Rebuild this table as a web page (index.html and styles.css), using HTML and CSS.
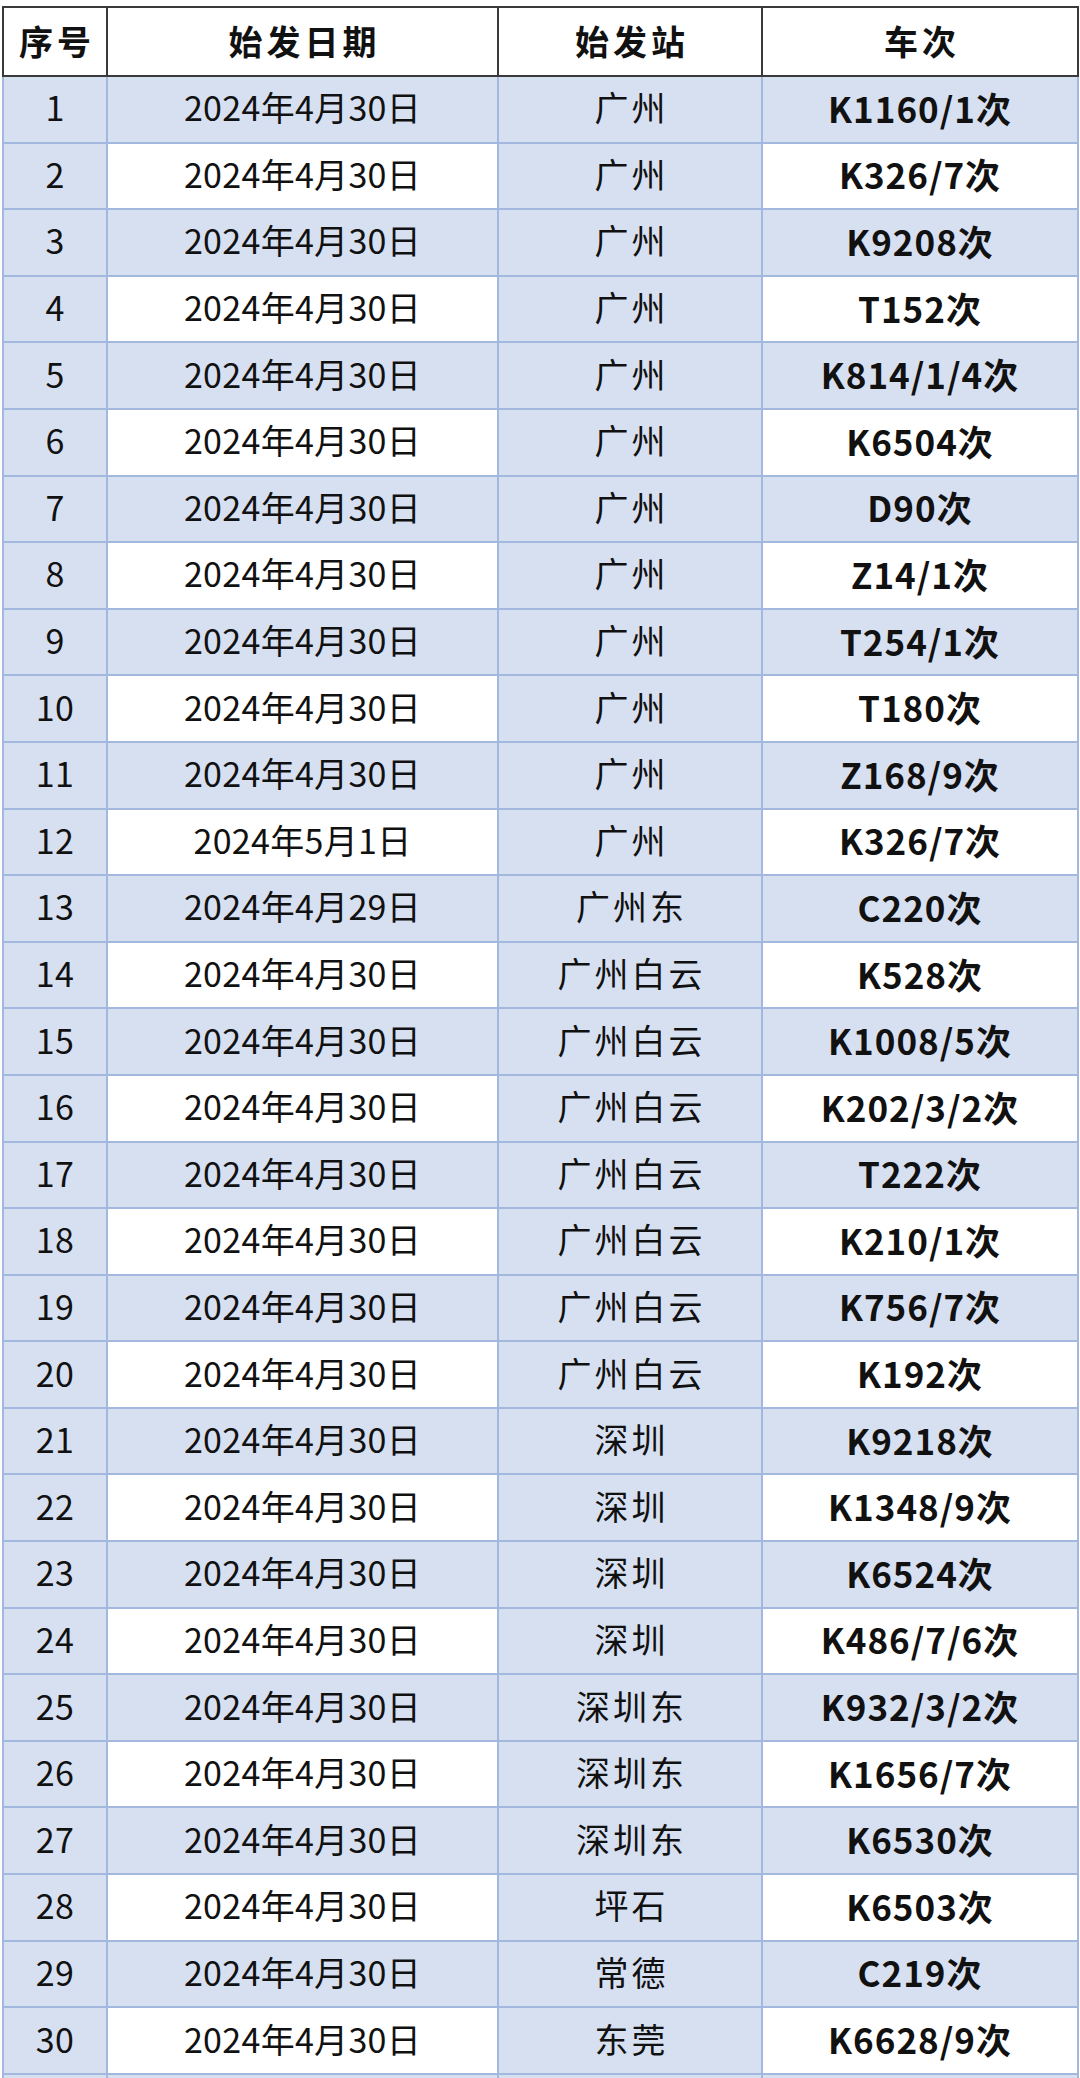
FILE: index.html
```html
<!DOCTYPE html>
<html lang="zh-CN">
<head>
<meta charset="utf-8">
<title>始发车次表</title>
<link rel="stylesheet" href="styles.css">
</head>
<body>
<div class="page">
<table class="sheet">
<colgroup><col class="w1"><col class="w2"><col class="w3"><col class="w4"></colgroup>
<thead>
<tr><th>序号</th><th>始发日期</th><th>始发站</th><th>车次</th></tr>
</thead>
<tbody>
<tr class="odd"><td>1</td><td>2024年4月30日</td><td>广州</td><td class="tn">K1160/1次</td></tr>
<tr><td>2</td><td>2024年4月30日</td><td>广州</td><td class="tn">K326/7次</td></tr>
<tr class="odd"><td>3</td><td>2024年4月30日</td><td>广州</td><td class="tn">K9208次</td></tr>
<tr><td>4</td><td>2024年4月30日</td><td>广州</td><td class="tn">T152次</td></tr>
<tr class="odd"><td>5</td><td>2024年4月30日</td><td>广州</td><td class="tn">K814/1/4次</td></tr>
<tr><td>6</td><td>2024年4月30日</td><td>广州</td><td class="tn">K6504次</td></tr>
<tr class="odd"><td>7</td><td>2024年4月30日</td><td>广州</td><td class="tn">D90次</td></tr>
<tr><td>8</td><td>2024年4月30日</td><td>广州</td><td class="tn">Z14/1次</td></tr>
<tr class="odd"><td>9</td><td>2024年4月30日</td><td>广州</td><td class="tn">T254/1次</td></tr>
<tr><td>10</td><td>2024年4月30日</td><td>广州</td><td class="tn">T180次</td></tr>
<tr class="odd"><td>11</td><td>2024年4月30日</td><td>广州</td><td class="tn">Z168/9次</td></tr>
<tr><td>12</td><td>2024年5月1日</td><td>广州</td><td class="tn">K326/7次</td></tr>
<tr class="odd"><td>13</td><td>2024年4月29日</td><td>广州东</td><td class="tn">C220次</td></tr>
<tr><td>14</td><td>2024年4月30日</td><td>广州白云</td><td class="tn">K528次</td></tr>
<tr class="odd"><td>15</td><td>2024年4月30日</td><td>广州白云</td><td class="tn">K1008/5次</td></tr>
<tr><td>16</td><td>2024年4月30日</td><td>广州白云</td><td class="tn">K202/3/2次</td></tr>
<tr class="odd"><td>17</td><td>2024年4月30日</td><td>广州白云</td><td class="tn">T222次</td></tr>
<tr><td>18</td><td>2024年4月30日</td><td>广州白云</td><td class="tn">K210/1次</td></tr>
<tr class="odd"><td>19</td><td>2024年4月30日</td><td>广州白云</td><td class="tn">K756/7次</td></tr>
<tr><td>20</td><td>2024年4月30日</td><td>广州白云</td><td class="tn">K192次</td></tr>
<tr class="odd"><td>21</td><td>2024年4月30日</td><td>深圳</td><td class="tn">K9218次</td></tr>
<tr><td>22</td><td>2024年4月30日</td><td>深圳</td><td class="tn">K1348/9次</td></tr>
<tr class="odd"><td>23</td><td>2024年4月30日</td><td>深圳</td><td class="tn">K6524次</td></tr>
<tr><td>24</td><td>2024年4月30日</td><td>深圳</td><td class="tn">K486/7/6次</td></tr>
<tr class="odd"><td>25</td><td>2024年4月30日</td><td>深圳东</td><td class="tn">K932/3/2次</td></tr>
<tr><td>26</td><td>2024年4月30日</td><td>深圳东</td><td class="tn">K1656/7次</td></tr>
<tr class="odd"><td>27</td><td>2024年4月30日</td><td>深圳东</td><td class="tn">K6530次</td></tr>
<tr><td>28</td><td>2024年4月30日</td><td>坪石</td><td class="tn">K6503次</td></tr>
<tr class="odd"><td>29</td><td>2024年4月30日</td><td>常德</td><td class="tn">C219次</td></tr>
<tr><td>30</td><td>2024年4月30日</td><td>东莞</td><td class="tn">K6628/9次</td></tr>
<tr class="odd"><td></td><td></td><td></td><td class="tn"></td></tr>
</tbody>
</table>
</div>
</body>
</html>
```

FILE: styles.css
```css
html, body {
  margin: 0;
  padding: 0;
  background: #ffffff;
}

.page {
  height: 2078px;
  overflow: hidden;
  padding: 6px 0 0 2px;
  box-sizing: border-box;
}

.sheet {
  border-collapse: collapse;
  table-layout: fixed;
  width: 1075px;
  font-family: "Noto Sans CJK SC", "Noto Sans", sans-serif;
  color: #111111;
}

.w1 { width: 104px; }
.w2 { width: 391px; }
.w3 { width: 264px; }
.w4 { width: 316px; }

.sheet th {
  height: 65px;
  padding: 0 0 2px 0;
  font-size: 34px;
  font-weight: 700;
  letter-spacing: 4px;
  text-indent: 4px;
  text-align: center;
  vertical-align: middle;
  background: #ffffff;
  border: 2px solid #3a3a3a;
  line-height: 1;
}

.sheet td {
  height: 66.6px;
  padding: 0 0 4px 0;
  box-sizing: border-box;
  font-size: 34px;
  font-weight: 400;
  letter-spacing: 0.3px;
  text-align: center;
  vertical-align: middle;
  line-height: 1;
  background: #ffffff;
  border: 2px solid #a3b8de;
}

.sheet td:nth-child(1),
.sheet td:nth-child(3),
.sheet tr.odd td {
  background: #d7e0f1;
}

.sheet td:nth-child(3) {
  letter-spacing: 3px;
  text-indent: 3px;
}

.sheet td.tn {
  font-size: 35px;
  font-weight: 600;
  letter-spacing: 1px;
}
```
